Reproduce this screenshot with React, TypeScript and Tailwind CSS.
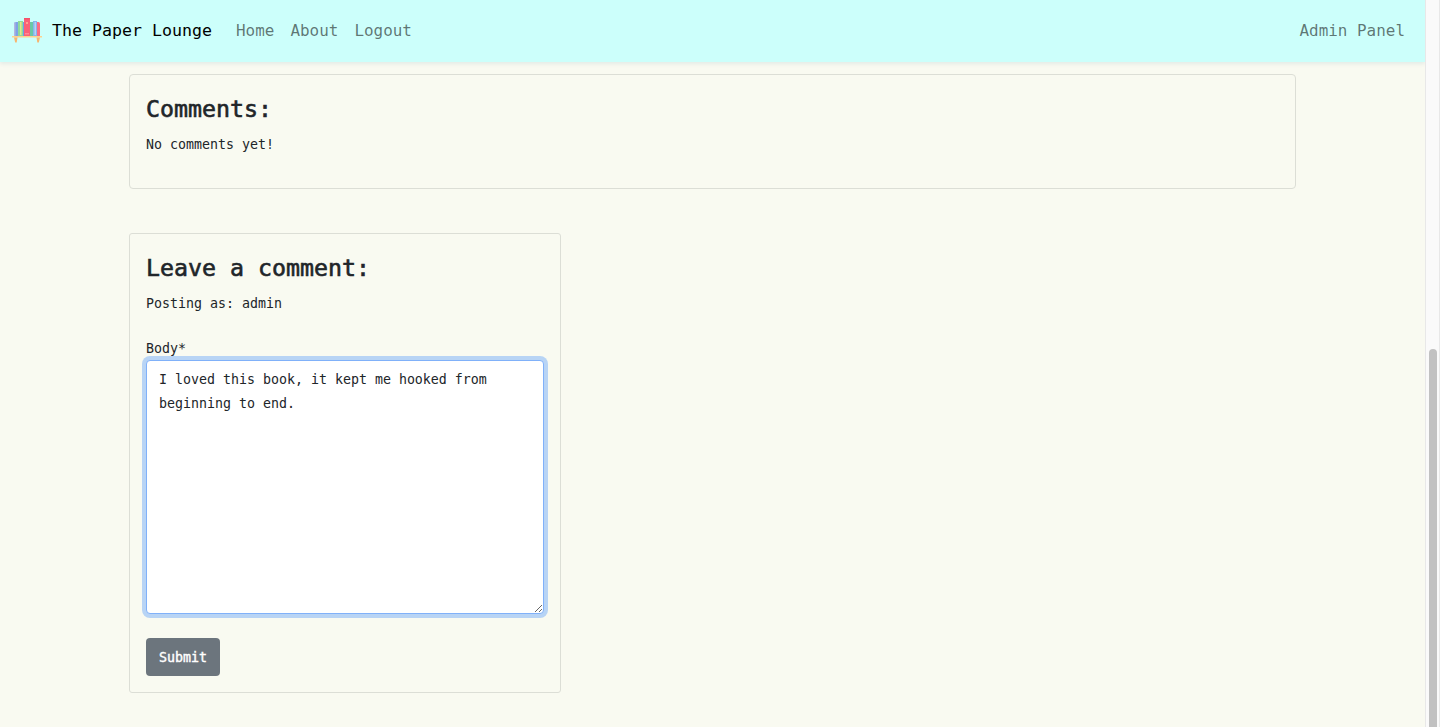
import React from "react";

function BookshelfLogo() {
  return (
    <svg className="h-[30px] w-[30px] shrink-0" viewBox="0 0 30 30" aria-hidden="true">
      <path d="M2 8q0-2 2-2h2v14H2z" fill="#7fa3e6" />
      <path d="M2 8q0-2 1.500-2v14H2z" fill="#b3b8e0" />
      <path d="M6 5h5v15H6z" fill="#8edb9b" />
      <path d="M8 6h1.500v13H8z" fill="#e3e68c" />
      <path d="M11 6h1v14h-1z" fill="#6f9bea" />
      <path d="M12 2h6v18h-6z" fill="#fb6076" />
      <path d="M12 2h6v1.500h-6z" fill="#f4516a" />
      <path d="M14 6h2v2h-2z" fill="#ffa08e" />
      <path d="M13 17h4v1.500h-4z" fill="#ff8997" />
      <path d="M18 6h3v14h-3z" fill="#69c8a6" />
      <path d="M21 5h4v15h-4z" fill="#86b4ed" />
      <path d="M22.500 6H24v13h-1.500z" fill="#b6d4f3" />
      <path d="M25 6h1.500q1.500 0 1.500 2v12h-3z" fill="#fb6c83" />
      <path d="M0 20h30v1.500H0z" fill="#ffd28c" />
      <path d="M2 21.500h3.500L4.700 26.500H3.200zM24.500 21.500H28L26.800 26.500h-1.500z" fill="#f7b56f" />
    </svg>
  );
}

function NavLink({ children }: { children: string }) {
  return (
    <a href="#" className="px-2 text-[15.946px] leading-7 text-black/55">
      {children}
    </a>
  );
}

function Heading({ children }: { children: string }) {
  return (
    <h3 className="mb-[7px] pt-px text-[23.254px] leading-[33.6px] font-medium [-webkit-text-stroke:0.6px_#212529]">
      {children}
    </h3>
  );
}

export default function App() {
  return (
    <div className="flex h-[727px] overflow-hidden bg-[#f9faf1] font-['DejaVu_Sans_Mono','Liberation_Mono',monospace] text-[13.295px] leading-6 text-[#212529]">
      <div className="min-w-0 flex-1">
        <nav className="flex h-[62px] items-center bg-[#ccfffb] px-3 shadow-[0_2px_4px_rgba(0,90,130,0.09)]">
          <a href="#" className="mr-4 flex items-center gap-2.5 text-[16.61px] leading-[30px] text-black">
            <BookshelfLogo />
            The Paper Lounge
          </a>
          <NavLink>Home</NavLink>
          <NavLink>About</NavLink>
          <NavLink>Logout</NavLink>
          <div className="ml-auto flex">
            <NavLink>Admin Panel</NavLink>
          </div>
        </nav>

        <main className="mt-3 ml-[129px] w-[1167px]">
          <section className="h-[115px] rounded border border-[#dcded6] px-4 pt-4">
            <Heading>Comments:</Heading>
            <p>No comments yet!</p>
          </section>

          <section className="mt-11 h-[460px] w-[432px] rounded-[3px] border border-[#dcded6] px-4 pt-4">
            <Heading>Leave a comment:</Heading>
            <p>Posting as: admin</p>
            <form className="mt-[21px]" onSubmit={(e) => e.preventDefault()}>
              <label htmlFor="body" className="block h-[23.4px]">
                Body*
              </label>
              <textarea
                id="body"
                spellCheck={false}
                className="block h-[254px] w-full rounded border border-[#80b1f9] bg-white px-3 pt-[7px] pb-1.5 shadow-[0_0_0_4px_#b8d4f5] outline-none"
                defaultValue="I loved this book, it kept me hooked from beginning to end."
              />
              <button
                type="submit"
                className="mt-6 block h-[38px] w-[74px] rounded bg-[#6c757d] pt-0.5 text-white [-webkit-text-stroke:0.4px_white]"
              >
                Submit
              </button>
            </form>
          </section>
        </main>
      </div>

      <div className="flex h-full w-[15px] justify-center border-x border-[#e8e8e8] bg-[#fafafa]">
        <div className="mt-[349px] h-[400px] w-2 rounded-full bg-[#c1c1c1]" />
      </div>
    </div>
  );
}
